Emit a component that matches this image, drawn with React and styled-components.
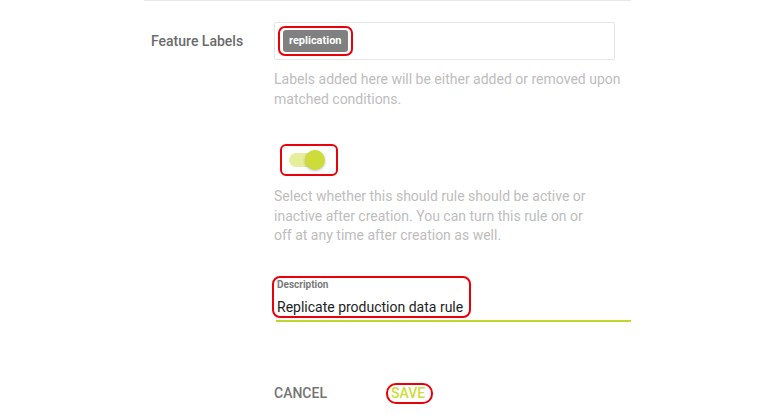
import React from 'react'
import styled, { createGlobalStyle } from 'styled-components'

const GlobalStyle = createGlobalStyle`
    body {
        margin: 0;
        background: #ffffff;
        font-family: Roboto, "Liberation Sans", sans-serif;
    }
`

const Page = styled.div`
    width: 487px;
    margin-left: 144px;
    border-top: 1px solid #e8e8e8;
`

const Row = styled.div`
    display: grid;
    grid-template-columns: 130px 1fr;
    margin-top: ${props => props.top || 0}px;
`

const Label = styled.div`
    padding-left: 7px;
    font-size: 14px;
    font-weight: 500;
    line-height: 38px;
    color: #6b6b6b;
`

const Field = styled.div`
    display: flex;
    flex-direction: column;
    align-items: flex-start;
`

const Annotation = styled.div`
    display: inline-flex;
    flex-direction: ${props => props.column ? 'column' : 'row'};
    align-items: ${props => props.column ? 'flex-start' : 'center'};
    border: 2px solid #e8000b;
    border-radius: ${props => props.radius || 7}px;
    padding: ${props => props.pad || '0'};
    margin-left: ${props => props.left || 0}px;
    box-sizing: border-box;
`

const ChipInput = styled.div`
    width: 341px;
    height: 38px;
    box-sizing: border-box;
    border: 1px solid #e6e6e6;
    border-radius: 2px;
    padding: 0 3px;
    display: flex;
    align-items: center;
`

const Chip = styled.span`
    background: #808080;
    color: #ffffff;
    font-size: 11px;
    font-weight: 700;
    line-height: 22px;
    padding: 0 6px;
    border-radius: 3px;
`

const Helper = styled.p`
    margin: ${props => props.top || 0}px 0 0;
    max-width: ${props => props.width || 357}px;
    font-size: 14px;
    line-height: 19.5px;
    color: #bdbdbd;
`

const SwitchBox = styled(Annotation)`
    width: 58px;
    height: 32px;
    margin-top: 35px;
    margin-left: 6px;
`

const Switch = styled.div`
    position: relative;
    width: 36px;
    height: 20px;
    margin-left: 7px;
`

const Track = styled.div`
    width: 34px;
    height: 14px;
    margin-top: 3px;
    border-radius: 7px;
    background: #e6ee9c;
`

const Thumb = styled.div`
    position: absolute;
    top: 0;
    left: 16px;
    width: 20px;
    height: 20px;
    border-radius: 50%;
    background: #cddc39;
    box-shadow: 0 1px 3px rgba(0, 0, 0, 0.25);
`

const TextField = styled.div`
    width: 355px;
    margin-top: 27px;
    margin-left: 2px;
    padding-bottom: 2px;
    border-bottom: 2px solid #c3d42a;
`

const FieldCaption = styled.span`
    font-size: 10px;
    font-weight: 700;
    line-height: 13px;
    color: #7a7a7a;
`

const FieldValue = styled.span`
    margin-top: 7px;
    font-size: 14px;
    line-height: 18px;
    color: #222222;
`

const Actions = styled.div`
    display: flex;
    align-items: center;
    gap: 59px;
    margin-top: 61px;
`

const Button = styled.span`
    font-size: 14px;
    font-weight: 500;
    line-height: 17px;
    text-transform: uppercase;
    color: ${props => props.primary ? '#cddc39' : '#757575'};
`

export default function App() {
    return (
        <>
            <GlobalStyle />
            <Page>
                <Row top={21}>
                    <Label>Feature Labels</Label>
                    <Field>
                        <ChipInput>
                            <Annotation pad="2px 3px">
                                <Chip>replication</Chip>
                            </Annotation>
                        </ChipInput>
                        <Helper top={10}>
                            Labels added here will be either added or removed upon matched conditions.
                        </Helper>
                        <SwitchBox radius={6}>
                            <Switch>
                                <Track />
                                <Thumb />
                            </Switch>
                        </SwitchBox>
                        <Helper top={11} width={320}>
                            Select whether this should rule should be active or inactive after creation. You can turn this rule on or off at any time after creation as well.
                        </Helper>
                        <TextField>
                            <Annotation column pad="0 6px 0 3px" left={-4} radius={8}>
                                <FieldCaption>Description</FieldCaption>
                                <FieldValue>Replicate production data rule</FieldValue>
                            </Annotation>
                        </TextField>
                        <Actions>
                            <Button>Cancel</Button>
                            <Annotation pad="0 6px 0 3px" radius={10}>
                                <Button primary>Save</Button>
                            </Annotation>
                        </Actions>
                    </Field>
                </Row>
            </Page>
        </>
    )
}
